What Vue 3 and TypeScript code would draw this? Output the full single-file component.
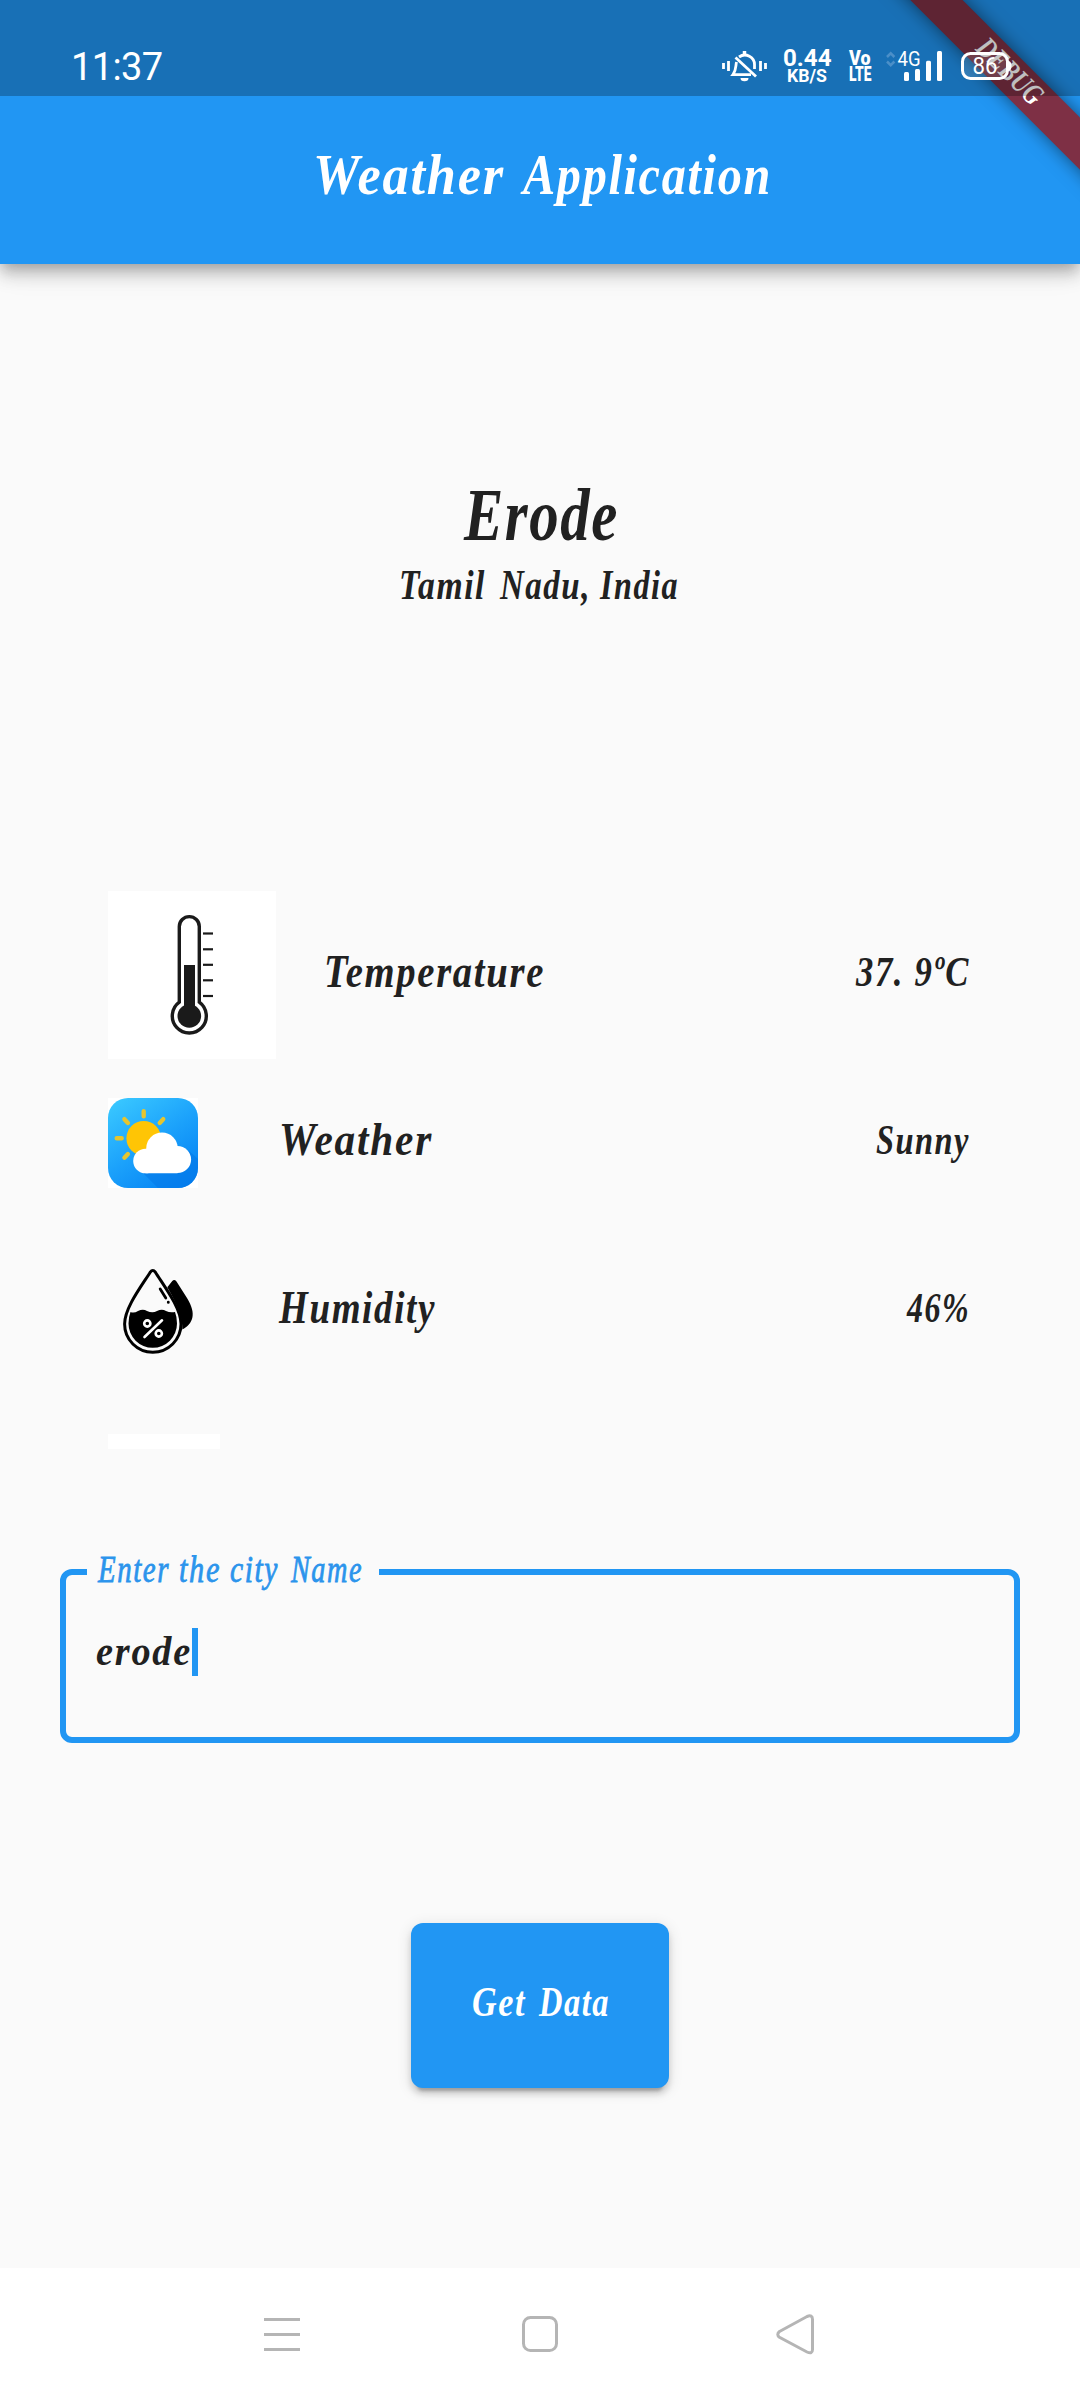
<script setup lang="ts">
interface Reading {
  kind: 'temperature' | 'weather' | 'humidity'
  label: string
  labelWidth: number
  value: string
  valueWidth: number
}

const readings: Reading[] = [
  { kind: 'temperature', label: 'Temperature', labelWidth: 221, value: '37. 9ºC', valueWidth: 114 },
  { kind: 'weather', label: 'Weather', labelWidth: 154, value: 'Sunny', valueWidth: 94 },
  { kind: 'humidity', label: 'Humidity', labelWidth: 157, value: '46%', valueWidth: 63 },
]
const tickMarks = [42.5, 58.3, 73.8, 89.3, 105]
const city = 'erode'
</script>

<template>
  <div class="screen">
    <header class="app-bar">
      <svg class="script title" width="460" height="60">
        <text x="3" y="46" textLength="192" lengthAdjust="spacingAndGlyphs">Weather</text>
        <text x="213" y="46" textLength="249" lengthAdjust="spacingAndGlyphs">Application</text>
      </svg>
    </header>

    <div class="banner-corner">
      <div class="banner">
        <svg class="script" width="80" height="36">
          <text x="1" y="26.500" textLength="81" lengthAdjust="spacingAndGlyphs">DEBUG</text>
        </svg>
      </div>
    </div>

    <div class="status-bar">
      <svg width="1080" height="96" viewBox="0 0 1080 96">
        <text class="clock" x="71" y="79.500" textLength="92">11:37</text>
        <g fill="none" stroke="#fff" stroke-width="2.800">
          <path d="M723.500 63v6M728.500 61v10M760.500 61v10M765.500 63v6" />
          <path d="M739 57C746 52 754.500 57.500 754.500 64.500V69M736.500 62C735.500 66 736.500 70 733 74.600H751" />
          <path d="M735.500 57.500L756 76.500" />
          <path d="M744.500 51v4" stroke-width="3.500" />
        </g>
        <path d="M740.500 78h8a4 3.200 0 0 1-8 0z" fill="#fff" />
        <text class="bold" font-size="23.500" x="783" y="65.700" textLength="48.500" lengthAdjust="spacingAndGlyphs">0.44</text>
        <text class="bold" font-size="17.500" x="787" y="82.300" textLength="40" lengthAdjust="spacingAndGlyphs">KB/S</text>
        <text class="bold heavy" font-size="19.500" x="849" y="65" textLength="21.500" lengthAdjust="spacingAndGlyphs">Vo</text>
        <text class="bold heavy" font-size="19.500" x="849" y="81" textLength="22.500" lengthAdjust="spacingAndGlyphs">LTE</text>
        <path d="M887 57l3.700-3.700 3.700 3.700M887 61.500l3.700 3.700 3.700-3.700" fill="none" stroke="#4b8fc8" stroke-width="2.500" />
        <text font-size="20.500" x="897.500" y="65.500" textLength="23" lengthAdjust="spacingAndGlyphs">4G</text>
        <g fill="#fff">
          <rect x="904" y="72" width="5" height="9" rx="1.500" />
          <rect x="915" y="69" width="5" height="12" rx="1.500" />
          <rect x="926" y="60.700" width="5" height="20.300" rx="1.500" />
          <rect x="937" y="51" width="5" height="30" rx="1.500" />
        </g>
        <rect x="962.500" y="53.500" width="45" height="25" rx="8" fill="#fff" fill-opacity="0.120" stroke="#fff" stroke-width="3" />
        <path d="M1009 61q2.500 1 2.500 5t-2.500 5z" fill="#fff" />
        <text font-size="23" x="972.500" y="73.500" textLength="25" lengthAdjust="spacingAndGlyphs">86</text>
      </svg>
    </div>

    <main class="body">
      <section class="place">
        <svg class="script city" width="155" height="70">
          <text x="1" y="55.500" textLength="155" lengthAdjust="spacingAndGlyphs">Erode</text>
        </svg>
        <svg class="script region" width="283" height="50">
          <text x="0" y="45" textLength="87" lengthAdjust="spacingAndGlyphs">Tamil</text>
          <text x="101" y="45" textLength="91" lengthAdjust="spacingAndGlyphs">Nadu,</text>
          <text x="201" y="45" textLength="79" lengthAdjust="spacingAndGlyphs">India</text>
        </svg>
      </section>

      <section class="readings">
        <div v-for="r in readings" :key="r.kind" class="row" :class="r.kind">
          <svg v-if="r.kind === 'temperature'" class="icon" width="168" height="168" viewBox="0 0 168 168">
            <rect width="168" height="168" fill="#fff" />
            <path d="M71.300 111.200V35.600a10 10 0 0 1 20 0V111.200a17 17 0 1 1-20 0z" fill="none" stroke="#1a1a1a" stroke-width="3.400" />
            <path d="M76 74h11v42H76z" fill="#1a1a1a" />
            <circle cx="81.300" cy="125" r="11.800" fill="#1a1a1a" />
            <path v-for="y in tickMarks" :key="y" :d="`M95 ${y}h10`" stroke="#1a1a1a" stroke-width="2.200" />
          </svg>
          <svg v-else-if="r.kind === 'weather'" class="icon" width="90" height="90" viewBox="0 0 90 90">
            <defs>
              <linearGradient id="sky" x1="0.150" y1="0" x2="0.850" y2="1">
                <stop offset="0" stop-color="#38c6ff" />
                <stop offset="0.500" stop-color="#1ba1fb" />
                <stop offset="1" stop-color="#0380f3" />
              </linearGradient>
              <clipPath id="tile"><rect width="90" height="90" rx="20" /></clipPath>
            </defs>
            <rect width="90" height="90" fill="#fff" />
            <g clip-path="url(#tile)">
              <rect width="90" height="90" fill="url(#sky)" />
              <path d="M33 73L50 90H90V61L81 53z" fill="#0579e8" opacity="0.600" />
              <circle cx="35.700" cy="40.300" r="17.300" fill="#ffc505" />
              <path d="M35.700 13.300v5M8.700 40.300h5M16.400 21.200l3.500 3.700M55.200 21.200l-3.500 3.700M16.400 59.700l3.500-3.700" stroke="#e5c52f" stroke-width="4.400" stroke-linecap="round" />
              <g fill="#fff">
                <circle cx="54" cy="50.400" r="15.800" />
                <circle cx="37.500" cy="63" r="12.300" />
                <circle cx="69.500" cy="61.500" r="13.600" />
                <path d="M37.500 56H69.500V75.200H37.500z" />
              </g>
            </g>
          </svg>
          <svg v-else class="icon" width="90" height="90" viewBox="0 0 90 90">
            <path d="M59.300 21.300L64.300 15Q66.300 13 68.500 15.500L79 32C89 48 85 58 74.300 63.500Q75 48 59.300 21.300z" />
            <path d="M42.200 6.200Q44.800 3 47.400 6.200C56 20 73 42 73 58A28.200 28.200 0 0 1 16.600 58C16.600 42 33.500 20 42.200 6.200z" fill="#fafafa" stroke="#000" stroke-width="3" />
            <path d="M22.500 46Q26 47.500 30 45Q35 42.500 39 45Q44.500 47.500 49 45Q54 42.500 58 45Q62 47 67 46Q69 51 69 57.500A24.200 24.200 0 0 1 20.500 57.500Q20.500 51 22.500 46z" />
            <path d="M52.200 23l5.600 9M60.300 36.200v.2" stroke="#000" stroke-width="2.800" stroke-linecap="round" />
            <g fill="none" stroke="#fff" stroke-width="2.600" stroke-linecap="round">
              <circle cx="39.300" cy="57.500" r="3.100" />
              <circle cx="50.800" cy="67.500" r="3.100" />
              <path d="M36.500 71L54 54.300" />
            </g>
          </svg>
          <svg class="script label" :width="r.labelWidth" height="60">
            <text x="0" y="41.500" :textLength="r.labelWidth" lengthAdjust="spacingAndGlyphs">{{ r.label }}</text>
          </svg>
          <svg class="script value" :width="r.valueWidth" height="60">
            <text x="0" y="40.500" :textLength="r.valueWidth" lengthAdjust="spacingAndGlyphs">{{ r.value }}</text>
          </svg>
        </div>
        <div class="row partial">
          <div class="blank-picture"></div>
        </div>
      </section>

      <fieldset class="field">
        <legend>
          <svg class="script caption" width="265" height="50">
            <text x="0" y="35" textLength="72" lengthAdjust="spacingAndGlyphs">Enter</text>
            <text x="81" y="35" textLength="42" lengthAdjust="spacingAndGlyphs">the</text>
            <text x="132" y="35" textLength="49" lengthAdjust="spacingAndGlyphs">city</text>
            <text x="193" y="35" textLength="72" lengthAdjust="spacingAndGlyphs">Name</text>
          </svg>
        </legend>
        <div class="entry">
          <svg class="script typed" width="96" height="48">
            <text x="0" y="36.500" textLength="96" lengthAdjust="spacingAndGlyphs">{{ city }}</text>
          </svg>
          <span class="caret"></span>
        </div>
      </fieldset>

      <button class="submit" type="button">
        <svg class="script" width="138" height="60">
          <text x="1" y="40" textLength="54" lengthAdjust="spacingAndGlyphs">Get</text>
          <text x="68" y="40" textLength="71" lengthAdjust="spacingAndGlyphs">Data</text>
        </svg>
      </button>
    </main>

    <nav class="nav-bar">
      <svg width="1080" height="132" viewBox="0 2268 1080 132" fill="none" stroke="#b5b5b5" stroke-width="3">
        <path d="M264 2319.400h36M264 2334.400h36M264 2349.400h36" />
        <rect x="523.500" y="2317.500" width="33" height="33" rx="7" />
        <path d="M779.500 2331.500L807 2316.500Q812.500 2314.200 812.500 2319.500V2349.500Q812.500 2354.500 807 2352L779.500 2337.300Q776 2334.400 779.500 2331.500z" />
      </svg>
    </nav>
  </div>
</template>

<style>
body {
  margin: 0;
}
</style>

<style scoped>
.screen {
  position: relative;
  width: 1080px;
  height: 2400px;
  display: flex;
  flex-direction: column;
  overflow: hidden;
  background: #fafafa;
}
svg {
  display: block;
  flex: none;
}
.script {
  overflow: visible;
  fill: #212121;
  font-family: "Liberation Serif", serif;
  font-weight: 700;
  font-style: italic;
  letter-spacing: 2px;
}
.app-bar {
  flex: none;
  height: 264px;
  box-sizing: border-box;
  padding-top: 148px;
  display: flex;
  justify-content: center;
  background: #2196f3;
  box-shadow: 0 6px 12px -3px rgba(0, 0, 0, 0.2), 0 12px 15px rgba(0, 0, 0, 0.14), 0 3px 30px rgba(0, 0, 0, 0.12);
}
.title {
  fill: #fff;
  font-size: 58px;
}
.banner-corner {
  position: absolute;
  top: 0;
  right: 0;
  width: 260px;
  height: 260px;
  overflow: hidden;
}
.banner {
  position: absolute;
  left: 38px;
  top: 53px;
  width: 300px;
  height: 36.5px;
  display: flex;
  justify-content: center;
  background: #7e3045;
  box-shadow: 0 0 18px rgba(0, 0, 0, 0.5);
  transform: rotate(45deg);
}
.banner .script {
  fill: #fff;
  font-size: 30px;
  letter-spacing: 0;
}
.status-bar {
  position: absolute;
  top: 0;
  left: 0;
  background: rgba(0, 0, 0, 0.25);
}
.status-bar text {
  fill: #fff;
  font-family: Roboto, sans-serif;
}
.status-bar .clock {
  font-size: 38px;
}
.status-bar .bold {
  font-weight: 700;
}
.status-bar .heavy {
  font-weight: 900;
}
.body {
  flex: none;
  height: 2004px;
  display: flex;
  flex-direction: column;
  align-items: center;
}
.place {
  flex: none;
  height: 627px;
  box-sizing: border-box;
  padding-top: 220px;
  display: flex;
  flex-direction: column;
  align-items: center;
}
.city {
  font-size: 74px;
}
.region {
  font-size: 43px;
}
.readings {
  flex: none;
  width: 864px;
  height: 558px;
  padding: 0 40px;
  overflow: hidden;
}
.row {
  height: 168px;
  display: flex;
  align-items: center;
}
.label {
  font-size: 46px;
  margin-left: 81px;
}
.temperature .label {
  margin-left: 48px;
}
.value {
  font-size: 43px;
  margin-left: auto;
  margin-right: 2px;
}
.blank-picture {
  width: 112px;
  height: 90px;
  background: #fff;
}
.field {
  flex: none;
  width: 960px;
  height: 196px;
  box-sizing: border-box;
  margin: 98px 0 0;
  padding: 0 30px;
  border: 6px solid #2196f3;
  border-radius: 12px;
}
.field legend {
  margin-left: -9px;
  padding: 0 16px 0 11px;
}
.caption {
  fill: #2b94ec;
  stroke: #2b94ec;
  stroke-width: 0.8px;
  font-size: 37px;
  font-weight: 400;
}
.entry {
  display: flex;
  align-items: center;
  padding-top: 31px;
}
.typed {
  font-size: 43px;
}
.caret {
  width: 6px;
  height: 48px;
  background: #2196f3;
}
.submit {
  flex: none;
  width: 258px;
  height: 165px;
  margin-top: 180px;
  padding: 0;
  border: 0;
  border-radius: 12px;
  display: flex;
  align-items: center;
  justify-content: center;
  background: #2196f3;
  box-shadow: 0 9px 3px -6px rgba(0, 0, 0, 0.2), 0 6px 6px rgba(0, 0, 0, 0.14), 0 3px 15px rgba(0, 0, 0, 0.12);
}
.submit .script {
  fill: #fff;
  font-size: 43px;
}
.nav-bar {
  flex: none;
  height: 132px;
  background: #fff;
}
</style>
